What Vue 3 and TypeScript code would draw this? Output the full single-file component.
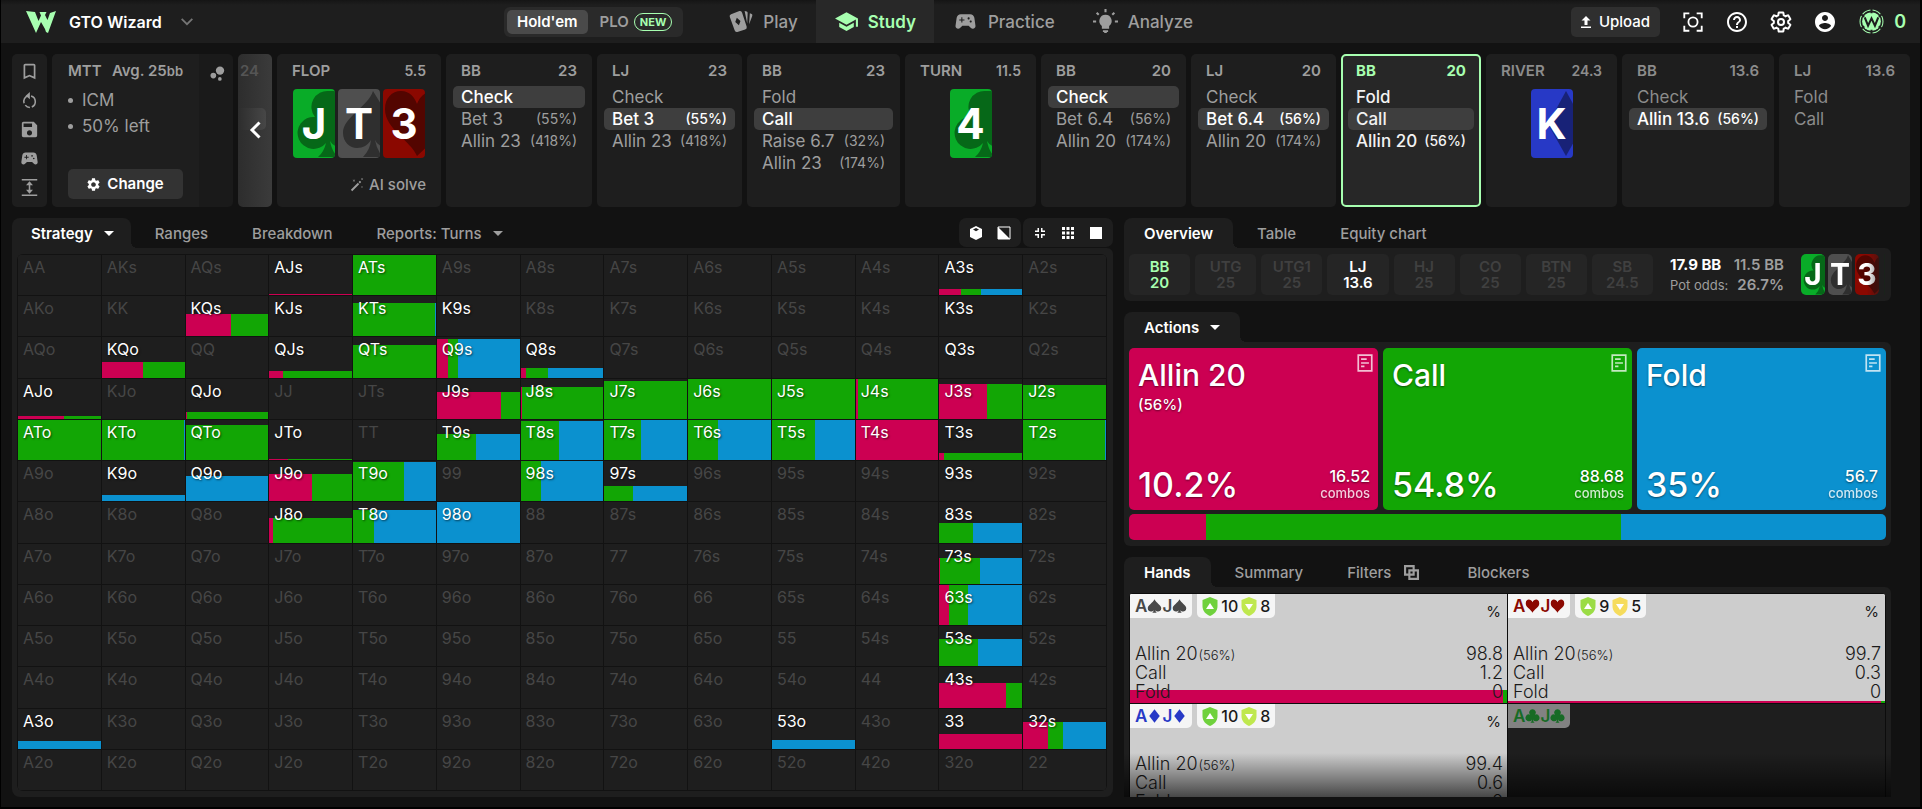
<script setup lang="ts">
type Suit = 'club' | 'spade' | 'heart' | 'diamond'

interface Option { label: string; size?: string; picked?: boolean }
interface Street { kind: 'street'; name: string; pot: string; cards: { rank: string; suit: Suit }[]; solve?: boolean }
interface Turn { kind: 'turn'; name: string; stack: string; options: Option[]; current?: boolean; future?: boolean }

const icons = {
  bookmark: 'M17 3H7c-1.1 0-2 .9-2 2v16l7-3 7 3V5c0-1.1-.9-2-2-2zm0 15l-5-2.18L7 18V5h10v13z',
  save: 'M17 3H5c-1.11 0-2 .9-2 2v14c0 1.1.89 2 2 2h14c1.1 0 2-.9 2-2V7l-4-4zm-5 16c-1.66 0-3-1.34-3-3s1.34-3 3-3 3 1.34 3 3-1.34 3-3 3zm3-10H5V5h10v4z',
  pad: 'M21.58 16.09l-1.09-7.66C20.21 6.46 18.52 5 16.53 5H7.47C5.48 5 3.79 6.46 3.51 8.43l-1.09 7.66C2.2 17.63 3.39 19 4.94 19c.68 0 1.32-.27 1.8-.75L9 16h6l2.25 2.25c.48.48 1.13.75 1.8.75 1.56 0 2.75-1.37 2.53-2.91zM11 11H9v2H8v-2H6v-1h2V8h1v2h2v1zm4-1c-.55 0-1-.45-1-1s.45-1 1-1 1 .45 1 1-.45 1-1 1zm2 3c-.55 0-1-.45-1-1s.45-1 1-1 1 .45 1 1-.45 1-1 1z',
  school: 'M5 13.18v4L12 21l7-3.82v-4L12 17l-7-3.82zM12 3L1 9l11 6 9-4.91V17h2V9L12 3z',
  help: 'M11 18h2v-2h-2v2zm1-16C6.48 2 2 6.48 2 12s4.48 10 10 10 10-4.48 10-10S17.52 2 12 2zm0 18c-4.41 0-8-3.59-8-8s3.59-8 8-8 8 3.59 8 8-3.59 8-8 8zm0-14c-2.21 0-4 1.79-4 4h2c0-1.1.9-2 2-2s2 .9 2 2c0 2-3 1.75-3 5h2c0-2.25 3-2.5 3-5 0-2.21-1.79-4-4-4z',
  account: 'M12 2C6.48 2 2 6.48 2 12s4.48 10 10 10 10-4.48 10-10S17.52 2 12 2zm0 3c1.66 0 3 1.34 3 3s-1.34 3-3 3-3-1.34-3-3 1.34-3 3-3zm0 14.2c-2.5 0-4.71-1.28-6-3.22.03-1.99 4-3.08 6-3.08 1.99 0 5.97 1.09 6 3.08-1.29 1.94-3.5 3.22-6 3.22z',
  gear: 'M19.14 12.94c.04-.3.06-.61.06-.94 0-.32-.02-.64-.07-.94l2.03-1.58c.18-.14.23-.41.12-.61l-1.92-3.32c-.12-.22-.37-.29-.59-.22l-2.39.96c-.5-.38-1.03-.7-1.62-.94l-.36-2.54c-.04-.24-.24-.41-.48-.41h-3.84c-.24 0-.43.17-.47.41l-.36 2.54c-.59.24-1.13.57-1.62.94l-2.39-.96c-.22-.08-.47 0-.59.22L2.74 8.87c-.12.21-.08.47.12.61l2.03 1.58c-.05.3-.09.63-.09.94s.02.64.07.94l-2.03 1.58c-.18.14-.23.41-.12.61l1.92 3.32c.12.22.37.29.59.22l2.39-.96c.5.38 1.03.7 1.62.94l.36 2.54c.05.24.24.41.48.41h3.84c.24 0 .44-.17.47-.41l.36-2.54c.59-.24 1.13-.56 1.62-.94l2.39.96c.22.08.47 0 .59-.22l1.92-3.32c.12-.22.07-.47-.12-.61l-2.01-1.58z',
  gearHole: 'M12 15.6c-1.98 0-3.6-1.62-3.6-3.6s1.62-3.6 3.6-3.6 3.6 1.62 3.6 3.6-1.62 3.6-3.6 3.6z',
}

/* Oversized suit marks behind the rank, drawn on a 42 x 69 card. */
const cardMarks: Record<Suit, string> = {
  club: 'M36 2a16 16 0 0 0-14 26a16 16 0 1 0 11 26q-2 9-8 14h20q-6-5-8-16q4 7 15 6V2z',
  spade: 'M35 2C30 18 5 28 5 44c0 9 7 15 14 15c6 0 11-3 14-8q-1 10-8 17h20q-6-6-8-17q3 7 14 8V28z',
  heart: 'M34 67C28 52 2 40 2 20C2 9 9 2 18 2s14 7 16 13C36 9 42 2 50 2v50z',
  diamond: 'M35 2L17 35l18 32L53 35z',
}

/* Small suit symbols on a 20 x 20 box. */
const suitGlyphs: Record<Suit, string> = {
  spade: 'M10 1C8 6 1 8.500 1 13c0 5 6 5.500 8 2.500Q8.500 18 7 19h6q-1.500-1-2-3.500c2 3 8 2.500 8-2.500c0-4.500-7-7-9-12z',
  heart: 'M10 19C8 14 1 12 1 6.500C1 0 8 0 10 5C12 0 19 0 19 6.500C19 12 12 14 10 19z',
  diamond: 'M10 1L3 10l7 9l7-9z',
  club: 'M10 1a4.300 4.300 0 0 0-3.300 7.200A4.500 4.500 0 1 0 9.200 14.500Q9 18 7 19h6q-2-1-2.200-4.500A4.500 4.500 0 1 0 13.300 8.200A4.300 4.300 0 0 0 10 1z',
}

const opt = (label: string, size = '', picked = false): Option => ({ label, size, picked })

const flop: { rank: string; suit: Suit }[] = [{ rank: 'J', suit: 'club' }, { rank: 'T', suit: 'spade' }, { rank: '3', suit: 'heart' }]

const line: (Street | Turn)[] = [
  { kind: 'street', name: 'FLOP', pot: '5.5', solve: true, cards: flop },
  { kind: 'turn', name: 'BB', stack: '23', options: [opt('Check', '', true), opt('Bet 3', '(55%)'), opt('Allin 23', '(418%)')] },
  { kind: 'turn', name: 'LJ', stack: '23', options: [opt('Check'), opt('Bet 3', '(55%)', true), opt('Allin 23', '(418%)')] },
  { kind: 'turn', name: 'BB', stack: '23', options: [opt('Fold'), opt('Call', '', true), opt('Raise 6.7', '(32%)'), opt('Allin 23', '(174%)')] },
  { kind: 'street', name: 'TURN', pot: '11.5', cards: [{ rank: '4', suit: 'club' }] },
  { kind: 'turn', name: 'BB', stack: '20', options: [opt('Check', '', true), opt('Bet 6.4', '(56%)'), opt('Allin 20', '(174%)')] },
  { kind: 'turn', name: 'LJ', stack: '20', options: [opt('Check'), opt('Bet 6.4', '(56%)', true), opt('Allin 20', '(174%)')] },
  { kind: 'turn', name: 'BB', stack: '20', current: true, options: [opt('Fold'), opt('Call', '', true), opt('Allin 20', '(56%)')] },
  { kind: 'street', name: 'RIVER', pot: '24.3', cards: [{ rank: 'K', suit: 'diamond' }] },
  { kind: 'turn', name: 'BB', stack: '13.6', future: true, options: [opt('Check'), opt('Allin 13.6', '(56%)', true)] },
  { kind: 'turn', name: 'LJ', stack: '13.6', future: true, options: [opt('Fold'), opt('Call')] },
]

/* hand -> [range height, all-in, call, fold], all in percent */
const strategy: Record<string, [number, number, number, number]> = {
  AJs: [3, 100, 0, 0], ATs: [100, 0, 100, 0], A3s: [15, 26, 24, 50],
  KQs: [55, 55, 45, 0], KJs: [0, 0, 0, 0], KTs: [83, 0, 99, 1], K9s: [0, 0, 0, 0], K3s: [0, 0, 0, 0],
  KQo: [38, 50, 50, 0], QJs: [17, 17, 83, 0], QTs: [81, 0, 100, 0], Q9s: [95, 13, 13, 74], Q8s: [25, 7, 26, 67], Q3s: [0, 0, 0, 0],
  AJo: [8, 56, 44, 0], QJo: [17, 2, 98, 0], J9s: [67, 77, 23, 0], J8s: [80, 2, 98, 0], J7s: [94, 0, 100, 0], J6s: [100, 0, 100, 0],
  J5s: [100, 0, 100, 0], J4s: [100, 3, 97, 0], J3s: [87, 58, 42, 0], J2s: [85, 0, 100, 0],
  ATo: [100, 0, 100, 0], KTo: [100, 0, 99, 1], QTo: [87, 0, 100, 0], JTo: [3, 23, 77, 0], T9s: [65, 0, 47, 53], T8s: [97, 0, 46, 54],
  T7s: [100, 0, 44, 56], T6s: [100, 0, 36, 64], T5s: [100, 0, 52, 48], T4s: [100, 100, 0, 0], T3s: [17, 5, 95, 0], T2s: [100, 0, 99, 1],
  K9o: [15, 0, 0, 100], Q9o: [62, 0, 0, 100], J9o: [69, 52, 48, 0], T9o: [97, 0, 62, 38], '98s': [100, 0, 25, 75], '97s': [39, 0, 34, 66], '93s': [0, 0, 0, 0],
  J8o: [60, 4, 96, 0], T8o: [80, 0, 25, 75], '98o': [100, 0, 0, 100], '83s': [50, 0, 40, 60],
  '73s': [64, 1, 48, 51], '63s': [100, 11, 24, 65], '53s': [69, 0, 47, 53], '43s': [62, 80, 20, 0],
  A3o: [20, 0, 0, 100], '53o': [22, 0, 0, 100], '33': [37, 100, 0, 0], '32s': [67, 30, 18, 52],
}

const ranks = 'AKQJT98765432'.split('')
const cells = ranks.flatMap((row, r) =>
  ranks.map((col, c) => {
    const hand = r === c ? row + col : r < c ? `${row}${col}s` : `${col}${row}o`
    return { hand, mix: strategy[hand] }
  }),
)

const seats = [
  { name: 'BB', stack: '20', cls: 'hero' }, { name: 'UTG', stack: '25', cls: '' }, { name: 'UTG1', stack: '25', cls: '' },
  { name: 'LJ', stack: '13.6', cls: 'live' }, { name: 'HJ', stack: '25', cls: '' }, { name: 'CO', stack: '25', cls: '' },
  { name: 'BTN', stack: '25', cls: '' }, { name: 'SB', stack: '24.5', cls: '' },
]

const actions = [
  { name: 'Allin 20', size: '(56%)', pct: '10.2%', combos: '16.52', cls: 'allin', share: 10.2 },
  { name: 'Call', size: '', pct: '54.8%', combos: '88.68', cls: 'call', share: 54.8 },
  { name: 'Fold', size: '', pct: '35%', combos: '56.7', cls: 'fold', share: 35 },
]

const hands: { suit: Suit; up: string; down: string; vals: string[]; height: number; allin: number; upColor: string; downColor: string }[] = [
  { suit: 'spade', up: '10', down: '8', vals: ['98.8', '1.2', '0'], height: 12, allin: 99, upColor: '#6fd13c', downColor: '#bfe84e' },
  { suit: 'heart', up: '9', down: '5', vals: ['99.7', '0.3', '0'], height: 2, allin: 99, upColor: '#9bdc45', downColor: '#f6dc5c' },
  { suit: 'diamond', up: '10', down: '8', vals: ['99.4', '0.6', '0'], height: 12, allin: 99, upColor: '#6fd13c', downColor: '#bfe84e' },
]
</script>

<template>
  <div class="app">
    <header class="top">
      <div class="brand">
        <svg class="logo" viewBox="0 0 30 22"><path d="M0 0l9 1 3.500 9L15 4.500 13.500 1h7l-1.500 3L21.500 9 24 2l6-2-8 22-2-1-1-3-4-7-5 11z" /></svg>
        <span class="brand-name">GTO Wizard</span>
        <svg class="chev" viewBox="0 0 14 9"><path d="M1 1l6 6 6-6" /></svg>
      </div>
      <div class="game">
        <button class="game-btn on">Hold'em</button>
        <button class="game-btn">PLO <span class="new">NEW</span></button>
      </div>
      <nav class="nav">
        <a href="#play" class="nav-link">
          <svg class="nav-ic" viewBox="0 0 24 24"><path fill-rule="evenodd" d="M2 5l8-3q2-.5 2.600 1.500L17 17q.5 2-1.500 2.800L8 22q-2 .5-2.600-1.500L.700 7.500Q.2 5.700 2 5zM7.500 8.500L6 12.500l3.500 3 1.500-4z" /><path d="M15 2l2 .4q1 .3.900 1.600l-.4 10zM20 4l1.800.7q1 .6.500 2l-3 8z" /></svg>Play</a>
        <a href="#study" class="nav-link on"><svg class="nav-ic" viewBox="0 0 24 24"><path :d="icons.school" /></svg>Study</a>
        <a href="#practice" class="nav-link"><svg class="nav-ic" viewBox="0 0 24 24"><path :d="icons.pad" /></svg>Practice</a>
        <a href="#analyze" class="nav-link">
          <svg class="nav-ic" viewBox="0 0 24 24"><path d="M12 5.500a6 6 0 0 0-3.500 10.800V19h7v-2.700A6 6 0 0 0 12 5.500zM9.500 20.500h5V22h-1l-.5 1h-2l-.5-1h-1z" /><path class="ray" d="M12 0v3M3.500 3.500l2 2M20.500 3.500l-2 2M0 12h3M21 12h3" /></svg>Analyze</a>
      </nav>
      <div class="tools">
        <button class="upload"><svg viewBox="0 0 10 12"><path d="M5 0l4.500 4.500H6.500V9h-3V4.500H.5zM0 10.500h10V12H0z" /></svg>Upload</button>
        <button class="ic-btn" aria-label="Focus"><svg viewBox="0 0 24 24" class="outline"><path d="M2.500 8V2.500H8M16 2.500h5.500V8M21.500 16v5.500H16M8 21.500H2.500V16" /><circle cx="12" cy="12" r="5" /></svg></button>
        <button class="ic-btn" aria-label="Help"><svg viewBox="1 1 22 22"><path :d="icons.help" /></svg></button>
        <button class="ic-btn" aria-label="Settings"><svg viewBox="1 1 22 22" class="outline"><path :d="icons.gear" /><circle cx="12" cy="12" r="3" /></svg></button>
        <button class="ic-btn" aria-label="Account"><svg viewBox="1 1 22 22"><path :d="icons.account" /></svg></button>
        <button class="coins" aria-label="Credits"><svg viewBox="0 0 24 24"><circle cx="12" cy="12" r="11" class="ring" /><circle cx="12" cy="12" r="9" /><path class="chip-w" d="M5.500 8l3.200 8L12 9l3.300 7 3.200-8" /><path class="chip-cut" d="M12 0v4M12 20v4M2 5l3 2.500M22 5l-3 2.500M2 19l3-2.500M22 19l-3-2.500" /></svg>0</button>
      </div>
    </header>

    <section class="line-row">
      <div class="rail">
        <button aria-label="Bookmark"><svg viewBox="2 2 20 20"><path :d="icons.bookmark" /></svg></button>
        <button aria-label="Restart"><svg viewBox="1 1 22 22" class="outline"><path d="M14 6.300A7.500 7.500 0 0 1 15 20.400M12.500 21A7.500 7.500 0 0 1 6.500 18M5 15.500A7.500 7.500 0 0 1 10 6" /><path class="solid" d="M12.500 1v9.500L7 5.800z" /></svg></button>
        <button aria-label="Save"><svg viewBox="2 2 20 20"><path :d="icons.save" /></svg></button>
        <button aria-label="Practice this spot"><svg viewBox="2 2 20 20"><path :d="icons.pad" /></svg></button>
        <button aria-label="Expand height"><svg viewBox="1 1 22 22" class="outline"><path d="M2 2h20M2 22h20M12 7v10" /><path class="solid" d="M12 4l4.500 5h-9zM12 20l4.500-5h-9z" /></svg></button>
      </div>

      <div class="setup">
        <div class="setup-main">
          <p class="setup-title"><span>MTT</span><span>Avg. 25<small>bb</small></span></p>
          <ul><li>ICM</li><li>50% left</li></ul>
          <button class="change"><svg viewBox="2 2 20 20"><path fill-rule="evenodd" :d="icons.gear + icons.gearHole" /></svg>Change</button>
        </div>
        <div class="setup-side"><svg viewBox="3 3 18 18"><circle cx="7" cy="14.500" r="3.400" /><circle cx="14.800" cy="18.500" r="2.200" /><circle cx="15" cy="8.500" r="5" /></svg></div>
      </div>

      <button class="back" aria-label="Previous actions"><span class="ghost">24</span><span class="ghost-bar"></span><svg viewBox="0 0 12 18"><path d="M10.500 1.500L3 9l7.500 7.500" /></svg></button>

      <div class="spots">
        <template v-for="(s, i) in line" :key="i">
          <div v-if="s.kind === 'street'" class="spot" :class="{ future: s.name === 'RIVER' }">
            <div class="spot-head"><span>{{ s.name }}</span><span class="pot">{{ s.pot }}</span></div>
            <div class="board">
              <div v-for="c in s.cards" :key="c.rank" class="card" :class="c.suit">
                <svg viewBox="0 0 42 69" preserveAspectRatio="none"><path :d="cardMarks[c.suit]" /></svg><b>{{ c.rank }}</b>
              </div>
            </div>
            <button v-if="s.solve" class="solve"><svg viewBox="0 0 16 16"><path d="M1 13.500L9 5.500l1.500 1.500L2.500 15zM9.800 4.700L11.300 3.200l1.500 1.500-1.500 1.500z" /><path d="M3 1.500l1.500 1L6 1.500 5 3l1 1.500-1.500-1L3 4.500 4 3zM12.500 0l1.300.8L15.100 0l-.8 1.300.8 1.300-1.300-.8-1.300.8.8-1.300zM12.500 9l1.200 1L15 9l-1 1.300 1 1.200-1.300-.8-1.200.8.800-1.200z" /></svg>AI solve</button>
          </div>
          <div v-else class="spot" :class="{ current: s.current, future: s.future }">
            <div class="spot-head"><span>{{ s.name }}</span><span>{{ s.stack }}</span></div>
            <div class="options">
              <button v-for="o in s.options" :key="o.label" class="option" :class="{ picked: o.picked }"><span>{{ o.label }}</span><small>{{ o.size }}</small></button>
            </div>
          </div>
        </template>
      </div>
    </section>

    <main class="main">
      <section class="left">
        <div class="tabs">
          <button class="tab on">Strategy<i class="caret"></i></button>
          <button class="tab">Ranges</button>
          <button class="tab">Breakdown</button>
          <button class="tab">Reports: Turns<i class="caret"></i></button>
          <div class="views">
            <div class="view-group">
              <button aria-label="Cube"><svg viewBox="0 0 14 14"><path fill-rule="evenodd" d="M7 0l6 3v8l-6 3-6-3V3zM4 3.500l3 1.700 3-1.700L7 2z" /></svg></button>
              <button aria-label="Split"><svg viewBox="0 0 14 14"><path d="M1 1l12 12H1z" /><path class="frame" d="M1 1h12v12H1z" /></svg></button>
            </div>
            <div class="view-group">
              <button aria-label="Compact"><svg viewBox="0 0 14 14"><path d="M4.500 2H6v4H2V4.500h2.500zM8 2h1.500v2.500H12V6H8zM2 8h4v4H4.500V9.500H2zM8 8h4v1.500H9.500V12H8z" /></svg></button>
              <button aria-label="Grid"><svg viewBox="0 0 14 14"><path d="M1 1h3v3H1zM5.500 1h3v3h-3zM10 1h3v3h-3zM1 5.500h3v3H1zM5.500 5.500h3v3h-3zM10 5.500h3v3h-3zM1 10h3v3H1zM5.500 10h3v3h-3zM10 10h3v3h-3z" /></svg></button>
              <button aria-label="Single"><svg viewBox="0 0 14 14"><path d="M1 1h12v12H1z" /></svg></button>
            </div>
          </div>
        </div>
        <div class="panel matrix-panel">
          <div class="matrix">
            <button v-for="c in cells" :key="c.hand" class="cell" :class="{ live: c.mix }">
              <span v-if="c.mix && c.mix[0]" class="mix" :style="{ height: c.mix[0] + '%' }">
                <i class="allin" :style="{ width: c.mix[1] + '%' }"></i><i class="call" :style="{ width: c.mix[2] + '%' }"></i><i class="fold" :style="{ width: c.mix[3] + '%' }"></i>
              </span>
              <span class="hand">{{ c.hand }}</span>
            </button>
          </div>
        </div>
      </section>

      <section class="right">
        <div>
          <div class="tabs">
            <button class="tab on">Overview</button><button class="tab">Table</button><button class="tab">Equity chart</button>
          </div>
          <div class="panel overview">
            <div class="seats">
              <button v-for="s in seats" :key="s.name" class="seat" :class="s.cls"><span>{{ s.name }}</span><span>{{ s.stack }}</span></button>
            </div>
            <div class="pots">
              <p><b>17.9 BB</b><span>11.5 BB</span></p>
              <p class="odds">Pot odds: <span>26.7%</span></p>
            </div>
            <div class="mini">
              <div v-for="c in flop" :key="c.rank" class="card small" :class="c.suit">
                <svg viewBox="0 0 42 69" preserveAspectRatio="none"><path :d="cardMarks[c.suit]" /></svg><b>{{ c.rank }}</b>
              </div>
            </div>
          </div>
        </div>

        <div>
          <div class="tabs"><button class="tab on">Actions<i class="caret"></i></button></div>
          <div class="panel actions">
            <div class="tiles">
              <button v-for="a in actions" :key="a.name" class="tile" :class="a.cls">
                <span class="tile-name">{{ a.name }}</span>
                <svg viewBox="0 0 16 16"><path d="M2 1h12v14H2z" /><path d="M4.500 4.500h5M4.500 8h7M4.500 11h3" /></svg>
                <span class="tile-size">{{ a.size }}</span>
                <span class="tile-pct">{{ a.pct }}</span>
                <span class="tile-combos">{{ a.combos }}<small>combos</small></span>
              </button>
            </div>
            <div class="total"><i v-for="a in actions" :key="a.name" :class="a.cls" :style="{ width: a.share + '%' }"></i></div>
          </div>
        </div>

        <div class="hands-box">
          <div class="tabs">
            <button class="tab on">Hands</button><button class="tab">Summary</button>
            <button class="tab">Filters<svg class="copy" viewBox="0 0 14 14"><path d="M1 1h8v8H1zM5 5h8v8H5z" /></svg></button>
            <button class="tab">Blockers</button>
          </div>
          <div class="panel hands-panel">
            <div class="hands">
              <div v-for="h in hands" :key="h.suit" class="combo">
                <span class="mix" :style="{ height: h.height + '%' }"><i class="allin" :style="{ width: h.allin + '%' }"></i><i class="call rest"></i></span>
                <div class="combo-top">
                  <span class="tag" :class="h.suit">A<svg viewBox="0 0 20 20"><path :d="suitGlyphs[h.suit]" /></svg>J<svg viewBox="0 0 20 20"><path :d="suitGlyphs[h.suit]" /></svg></span>
                  <span class="tag stats">
                    <svg viewBox="0 0 16 19" :style="{ color: h.upColor }"><path d="M8 0l7.500 3v6c0 5-3 8-7.500 10C3.500 17 .5 14 .5 9V3z" /><path class="tri" d="M8 6l4 6H4z" /></svg>{{ h.up }}
                    <svg viewBox="0 0 16 19" :style="{ color: h.downColor }"><path d="M8 0l7.500 3v6c0 5-3 8-7.500 10C3.500 17 .5 14 .5 9V3z" /><path class="tri" d="M8 13l4-6H4z" /></svg>{{ h.down }}
                  </span>
                  <span class="unit">%</span>
                </div>
                <dl>
                  <div><dt>Allin 20<small>(56%)</small></dt><dd>{{ h.vals[0] }}</dd></div>
                  <div><dt>Call</dt><dd>{{ h.vals[1] }}</dd></div>
                  <div><dt>Fold</dt><dd>{{ h.vals[2] }}</dd></div>
                </dl>
              </div>
              <div class="combo off">
                <div class="combo-top"><span class="tag club">A<svg viewBox="0 0 20 20"><path :d="suitGlyphs.club" /></svg>J<svg viewBox="0 0 20 20"><path :d="suitGlyphs.club" /></svg></span></div>
              </div>
            </div>
          </div>
        </div>
      </section>
    </main>
  </div>
</template>

<style>
body { background: #121212; }
</style>

<style scoped>
.app, .app * { box-sizing: border-box; }
.app {
  height: 100vh; min-width: 1500px; overflow: hidden; display: flex; flex-direction: column;
  background: #121212; border: solid #000; border-width: 0 2px 2px 1px; color: #9e9e9e;
  font-family: Inter, Roboto, "Liberation Sans", sans-serif; font-size: 16px; line-height: 20px;
}
button { font: inherit; color: inherit; background: none; border: 0; padding: 0; margin: 0; cursor: pointer; }
a { color: inherit; text-decoration: none; }
p, ul, dl, dd { margin: 0; padding: 0; }
svg { display: block; flex: none; fill: currentColor; }
i { display: block; }
.allin { background: #cc0052; }
.call { background: #12a605; }
.fold { background: #0b91cf; }
.outline { fill: none; stroke: currentColor; stroke-width: 2; }
.solid { fill: currentColor; stroke: none; }

/* header */
.top { display: flex; align-items: center; height: 43px; flex: none; background: linear-gradient(#151515, #1e1e1e 5px); }
.brand { flex: 0 0 503px; padding-left: 25px; display: flex; align-items: center; color: #fff; }
.logo { width: 30px; height: 22px; fill: #a7ffb0; }
.brand-name { margin-left: 13px; font-size: 16px; font-weight: 600; }
.chev { width: 14px; height: 8px; margin-left: 18px; fill: none; stroke: #757575; stroke-width: 2; }
.game { display: flex; height: 30px; padding: 3px; gap: 4px; background: #2a2a2a; border-radius: 6px; font-size: 15px; font-weight: 600; }
.game-btn { height: 24px; padding: 0 8px; border-radius: 5px; display: flex; align-items: center; gap: 5px; }
.game-btn.on { background: #4a4a4a; color: #fff; padding: 0 10px; }
.new { border: 1px solid #a7ffb0; color: #a7ffb0; border-radius: 9px; font-size: 11px; line-height: 16px; padding: 0 5px; font-weight: 700; }
.nav { display: flex; align-self: stretch; margin-left: 28px; font-size: 17px; font-weight: 500; }
.nav-link { display: flex; align-items: center; gap: 9px; padding: 0 18px; }
.nav-link.on { background: #282828; color: #a7ffb0; font-weight: 600; }
.nav-link.on ~ .nav-link { gap: 10px; padding: 0 19px; }
.nav-ic { width: 25px; height: 25px; }
.ray { stroke: currentColor; stroke-width: 2; }
.tools { margin-left: auto; padding-right: 14px; display: flex; align-items: center; color: #fff; }
.upload { display: flex; align-items: center; gap: 8px; height: 30px; padding: 0 10px; border-radius: 5px; background: #2f2f2f; font-size: 15px; font-weight: 500; }
.upload svg { width: 10px; height: 12px; }
.ic-btn { margin-left: 22px; }
.ic-btn svg { width: 22px; height: 22px; }
.coins { margin-left: 23px; display: flex; align-items: center; gap: 10px; color: #a7ffb0; font-size: 18px; font-weight: 600; }
.coins svg { width: 25px; height: 25px; }
.ring { fill: none; stroke: currentColor; stroke-width: 1; }
.chip-w { fill: none; stroke: #1e1e1e; stroke-width: 2; }
.chip-cut { stroke: #1e1e1e; stroke-width: 2; }

/* action line */
.line-row { flex: none; display: flex; gap: 5px; margin: 11px 10px 11px 11px; height: 153px; }
.rail { flex: none; width: 35px; background: #1e1e1e; border-radius: 5px; display: flex; flex-direction: column; align-items: center; gap: 12px; padding-top: 9px; }
.rail svg { width: 17px; height: 17px; }
.setup { flex: none; width: 181px; display: flex; border-radius: 5px; overflow: hidden; background: #1a1a1a; }
.setup-main { width: 147px; background: #1e1e1e; padding: 7px 16px 8px; display: flex; flex-direction: column; }
.setup-title { display: flex; justify-content: space-between; font-size: 15px; font-weight: 600; white-space: nowrap; }
.setup-title small { font-size: 13px; }
.setup ul { list-style: none; font-size: 17px; margin-top: 6px; }
.setup li { line-height: 26px; display: flex; align-items: center; gap: 9px; }
.setup li::before { content: ""; width: 5px; height: 5px; border-radius: 50%; background: currentColor; }
.change { margin-top: auto; height: 30px; border-radius: 5px; background: #333; color: #fff; font-size: 15px; font-weight: 600; display: flex; align-items: center; justify-content: center; gap: 7px; }
.change svg { width: 13px; height: 13px; }
.setup-side { flex: 1; padding: 12px 0 0 11px; }
.setup-side svg { width: 15px; height: 15px; }
.back { position: relative; flex: none; width: 34px; overflow: hidden; border-radius: 5px; background: linear-gradient(90deg, #2d2d2d, #3b3b3b); color: #fff; }
.back svg { position: absolute; left: 11px; top: 67px; width: 12px; height: 18px; fill: none; stroke: #fff; stroke-width: 3; }
.ghost { position: absolute; left: 2px; top: 7px; font-size: 15px; font-weight: 600; color: #555; }
.ghost-bar { position: absolute; left: 0; top: 54px; width: 28px; height: 22px; border-radius: 0 5px 5px 0; background: linear-gradient(90deg, #2d2d2d, #474747); }
.spots { flex: 1; min-width: 0; display: grid; gap: 5px; grid-template-columns: 164fr 146fr 145fr 153fr 131fr 145fr 145fr 140fr 131fr 152fr 131fr; }
.spot { min-width: 0; background: #1e1e1e; border-radius: 5px; padding: 7px 7px 8px; display: flex; flex-direction: column; }
.spot-head { display: flex; justify-content: space-between; padding: 0 8px; font-size: 15px; font-weight: 600; }
.pot { font-size: 14px; }
.board { display: flex; justify-content: center; gap: 3px; margin-top: 8px; }
.card { position: relative; width: 42px; height: 69px; border-radius: 4px; overflow: hidden; display: flex; align-items: center; justify-content: center; color: #fff; }
.card svg { position: absolute; inset: 0; width: 100%; height: 100%; }
.card b { position: relative; font-size: 42px; line-height: 69px; font-weight: 700; }
.card.club { background: #09ac28; } .card.club svg { fill: #066818; }
.card.spade { background: #4f4f4f; } .card.spade svg { fill: #2f2f2f; }
.card.heart { background: #8b0800; } .card.heart svg { fill: #530500; }
.card.diamond { background: #2739c6; } .card.diamond svg { fill: #182277; }
.card.small { width: 24px; height: 41px; border-radius: 5px; }
.card.small b { font-size: 30px; line-height: 41px; }
.solve { margin: auto 8px 4px auto; display: flex; align-items: center; gap: 5px; font-size: 15px; font-weight: 500; }
.solve svg { width: 14px; height: 14px; }
.options { display: flex; flex-direction: column; margin-top: 5px; }
.option { display: flex; justify-content: space-between; align-items: center; height: 22px; padding: 0 8px; border-radius: 5px; font-size: 17px; white-space: nowrap; }
.option small { font-size: 14px; }
.option.picked { background: #3e3e3e; color: #fff; font-weight: 500; }
.spot.current { background: #272727; border: 2px solid #a7ffb0; padding: 5px 5px 6px; }
.current .spot-head { color: #a7ffb0; font-weight: 700; }
.current .option { color: #f2f2f2; font-weight: 500; }
.future .spot-head, .future .option:not(.picked) { color: #8c8c8c; }

/* panels */
.main { flex: 1; min-height: 0; display: grid; grid-template-columns: minmax(0, 1101fr) minmax(0, 767fr); column-gap: 11px; padding: 0 29px 10px 11px; }
.left, .right, .hands-box { display: flex; flex-direction: column; min-height: 0; }
.right { gap: 11px; }
.hands-box { flex: 1; }
.tabs { display: flex; flex: none; height: 30px; font-size: 15px; }
.tab { position: relative; display: flex; align-items: center; padding: 1px 19px 0; height: 30px; margin-right: 6px; font-weight: 500; }
.tab.on { background: #1e1e1e; color: #fff; border-radius: 8px 8px 0 0; font-weight: 600; margin-right: 5px; }
.tab.on::after { content: ""; position: absolute; left: 100%; bottom: 0; width: 6px; height: 6px; background: radial-gradient(circle at 100% 0, transparent 6px, #1e1e1e 6px); }
.left .tab.on { padding-right: 17px; }
.right .tab { padding: 1px 20px 0; margin-right: 4px; }
.caret { width: 0; height: 0; margin-left: 11px; border: solid transparent; border-width: 5px 5px 0; border-top-color: currentColor; }
.copy { width: 15px; height: 15px; margin: 0 4px 0 13px; fill: none; stroke: currentColor; stroke-width: 2; }
.panel { background: #1e1e1e; border-radius: 0 6px 6px 6px; }
.views { margin-left: auto; display: flex; gap: 2px; color: #fff; }
.view-group { display: flex; align-items: center; gap: 14px; height: 29px; padding: 0 10px; border-radius: 7px; background: #1e1e1e; }
.view-group svg { width: 14px; height: 14px; }
.frame { fill: none; stroke: currentColor; }
.matrix-panel { flex: 1; min-height: 0; padding: 6px 6px 6px 5px; border-radius: 0 6px 8px 8px; }
.matrix { height: 100%; display: grid; grid-template-columns: repeat(13, minmax(0, 1fr)); grid-template-rows: repeat(13, minmax(0, 1fr)); gap: 1px; padding: 1px; background: #121212; border-radius: 6px; overflow: hidden; }
.cell { position: relative; background: #1e1e1e; color: #464646; text-align: left; min-height: 0; }
.hand { position: absolute; left: 5px; top: 2px; line-height: 20px; }
.cell.live { color: #fff; }
.live .hand { text-shadow: 1px 1px 2px rgba(0, 0, 0, .6); }
.mix { position: absolute; left: 0; right: 0; bottom: 0; display: flex; }
.rest { flex: 1; }

/* overview */
.overview { display: flex; align-items: center; padding: 6px 6px 6px 5px; }
.seats { flex: 1; display: grid; grid-template-columns: repeat(8, 1fr); gap: 5px; }
.seat { height: 41px; border-radius: 5px; background: #252525; color: #404040; font-weight: 600; display: flex; flex-direction: column; align-items: center; justify-content: center; font-size: 15px; line-height: 16px; }
.seat.hero { color: #a7ffb0; }
.seat.live { color: #fff; }
.pots { width: 114px; margin: 0 17px; font-size: 15px; font-weight: 600; white-space: nowrap; }
.pots p { display: flex; justify-content: space-between; }
.pots b { color: #fff; font-weight: 700; }
.odds { align-items: baseline; font-size: 13px; font-weight: 400; }
.odds span { font-size: 15px; font-weight: 600; }
.mini { display: flex; gap: 3px; width: 84px; border-right: 1px solid #143018; mask-image: linear-gradient(90deg, #000 66px, rgba(0, 0, 0, .25)); }
.mini .card { flex: none; }

/* actions */
.actions { padding: 6px 5px; }
.tiles { display: grid; grid-template-columns: repeat(3, 1fr); gap: 5px; }
.tile { height: 162px; border-radius: 5px; color: #fff; padding: 9px 8px 7px 9px; display: grid; grid-template-columns: 1fr auto; grid-template-rows: 36px 1fr auto; text-align: left; text-shadow: 0 1px 2px rgba(0, 0, 0, .5); }
.tile-name { font-size: 30px; line-height: 36px; font-weight: 500; }
.tile svg { justify-self: end; width: 18px; height: 18px; margin: -3px -4px 0 0; fill: none; stroke: currentColor; stroke-width: 1.500; opacity: .75; }
.tile-size { grid-column: 1 / 3; font-size: 15px; font-weight: 500; padding-top: 2px; }
.tile-pct { font-size: 34px; line-height: 36px; font-weight: 500; }
.tile-combos { text-align: right; font-size: 16px; line-height: 18px; font-weight: 500; }
.tile-combos small { display: block; font-size: 13px; line-height: 16px; opacity: .8; }
.total { display: flex; height: 26px; margin-top: 4px; border-radius: 5px; overflow: hidden; }

/* hands */
.hands-panel { position: relative; flex: 1; min-height: 0; overflow: hidden; padding: 6px 5px 0; border-radius: 0 6px 0 0; }
.hands-panel::after { content: ""; position: absolute; left: 0; right: 0; bottom: 0; height: 44px; background: linear-gradient(transparent, rgba(0, 0, 0, .65)); }
.hands { display: grid; grid-template-columns: 1fr 1fr; grid-auto-rows: 109px; gap: 1px; padding: 1px; background: #0c0c0c; border-radius: 5px; overflow: hidden; }
.combo { position: relative; background: #cdcdcd; color: #1a1a1a; }
.combo.off { background: #1e1e1e; }
.combo-top { position: relative; display: flex; gap: 5px; height: 48px; align-items: flex-start; }
.tag { height: 24px; padding: 0 5px; background: #f5f5f5; border-radius: 0 0 5px 0; display: flex; align-items: center; font-weight: 600; font-size: 17px; }
.tag svg { width: 15px; height: 16px; }
.tag.spade { color: #484848; } .tag.heart { color: #8b0800; } .tag.diamond { color: #2739c6; } .tag.club { color: #176b25; }
.off .tag { background: #828282; }
.tag.stats { border-radius: 0 0 5px 5px; gap: 3px; font-weight: 500; font-size: 16px; color: #1a1a1a; }
.tag.stats svg { width: 16px; height: 19px; }
.tri { fill: #fff; }
.unit { margin-left: auto; padding: 8px 6px 0 0; font-size: 15px; }
dl { position: relative; padding: 2px 4px 0 5px; }
dl div { display: flex; justify-content: space-between; height: 19px; line-height: 19px; font-size: 18px; font-weight: 300; }
dl small { font-size: 13px; margin-left: 1px; }
</style>
